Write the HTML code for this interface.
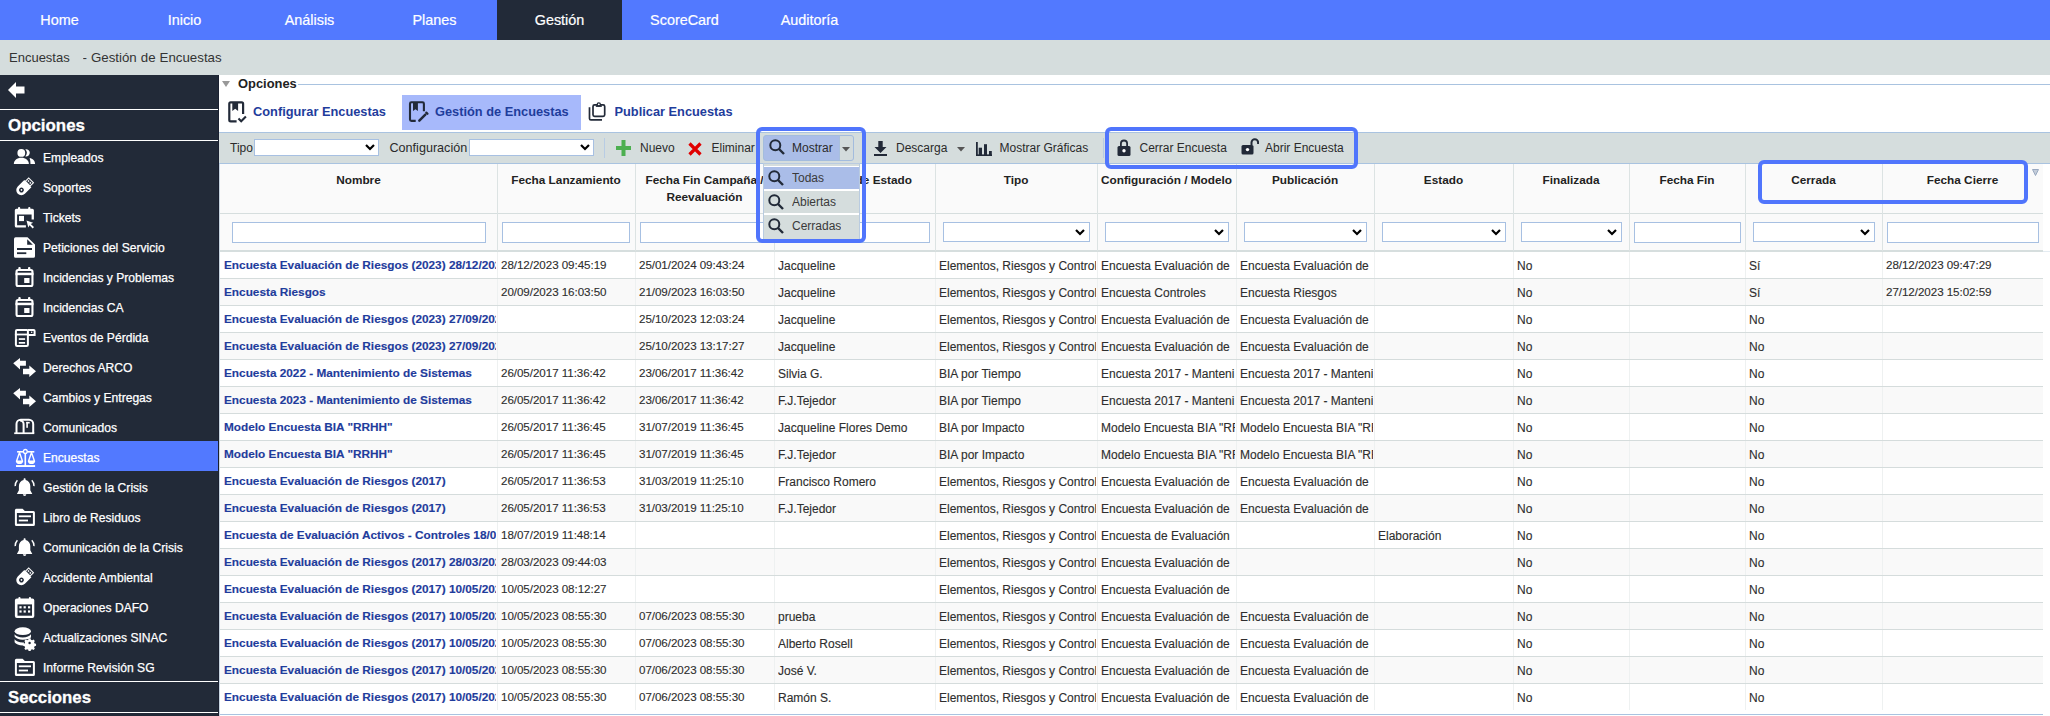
<!DOCTYPE html><html><head><meta charset="utf-8"><style>
*{margin:0;padding:0;box-sizing:border-box}
html,body{width:2050px;height:716px;overflow:hidden;background:#fff;font-family:"Liberation Sans",sans-serif}
.a{position:absolute}
.t{position:absolute;white-space:nowrap;overflow:hidden}
.nav{left:0;top:0;width:2050px;height:40px;background:#5279FF}
.navi{position:absolute;top:0;height:40px;line-height:40px;color:#fff;font-size:14.4px;text-align:center;width:125px;-webkit-text-stroke:0.2px #fff}
.crumb{left:0;top:40px;width:2050px;height:35px;background:#D5DDDD}
.side{left:0;top:75px;width:219px;height:641px;background:#222A38}
.sitem{position:absolute;left:0;width:218px;height:30px}
.sitem .lbl{position:absolute;left:43px;top:2px;line-height:30px;color:#fff;font-size:12.1px;white-space:nowrap;-webkit-text-stroke:0.25px #fff}
.sitem svg{position:absolute}
.hline{position:absolute;left:0;width:218px;height:2px;background:#fff}
.tb{left:219px;top:132px;width:1831px;height:32px;background:#D5DDDD;border-top:1px solid #A9C3E0;border-bottom:1px solid #A9C3E0}
.tbt{position:absolute;top:133px;height:32px;line-height:31px;font-size:12px;color:#2a2a2a;white-space:nowrap}
.sel{position:absolute;background:#fff;border:1px solid #A7C0E2}
.chev{position:absolute}
.hbox{position:absolute;border:4px solid #5075FC;border-radius:6px}
.hd{position:absolute;top:164px;height:49px;background:#FAFAFA}
.hdt{position:absolute;top:172px;line-height:17px;font-size:11.8px;font-weight:bold;color:#222;text-align:center;white-space:nowrap}
.cell{position:absolute;height:26px;line-height:26px;white-space:nowrap;overflow:hidden;font-size:12px;color:#2E2E2E;-webkit-text-stroke:0.12px #2E2E2E}
.nm{font-weight:bold;color:#1F3C9C;font-size:11.8px;-webkit-text-stroke:0.15px #1F3C9C}
.dt{font-size:11.6px;letter-spacing:-0.05px}
</style></head><body>
<div class="a nav"></div>
<div class="a" style="left:497px;top:0;width:125px;height:40px;background:#222A38"></div>
<div class="navi" style="left:-3.0px">Home</div>
<div class="navi" style="left:122.0px">Inicio</div>
<div class="navi" style="left:247.0px">Análisis</div>
<div class="navi" style="left:372.0px">Planes</div>
<div class="navi" style="left:497.0px">Gestión</div>
<div class="navi" style="left:622.0px">ScoreCard</div>
<div class="navi" style="left:747.0px">Auditoría</div>
<div class="a crumb"></div>
<div class="t" style="left:9px;top:40px;height:35px;line-height:35px;font-size:13px;color:#333">Encuestas</div>
<div class="t" style="left:82.5px;top:40px;height:35px;line-height:35px;font-size:13.3px;color:#333;word-spacing:0.3px">- Gestión de Encuestas</div>
<div class="a side"></div>
<svg class="a" style="left:8px;top:82px" width="17" height="16" viewBox="0 0 17 16"><path d="M0 8 L8 0 L8 4.5 L16.5 4.5 L16.5 11.5 L8 11.5 L8 16 Z" fill="#fff"/></svg>
<div class="hline" style="top:109px;height:1px"></div>
<div class="t" style="left:8px;top:112px;line-height:27px;font-size:16.9px;font-weight:bold;color:#fff;-webkit-text-stroke:0.3px #fff">Opciones</div>
<div class="hline" style="top:140px;height:1px"></div>
<div class="sitem" style="top:141px;"><svg width="30" height="30" viewBox="10 0 30 30" fill="#fff" style="left:10px;top:0"><circle cx="21.3" cy="11.9" r="3.9"/><path d="M25.3 8.3a3.65 3.65 0 1 1 0 7.1a5.3 5.3 0 0 0 0-7.1z"/><path d="M13.8 23.1c0-3.7 3.3-6.3 7.55-6.3s7.55 2.6 7.55 6.3z"/><path d="M29.6 17c3.2 0.5 5.5 2.7 5.5 6.1h-4.6c0-2.3-0.3-4.4-0.9-6.1z"/></svg><div class="lbl">Empleados</div></div>
<div class="sitem" style="top:171px;"><svg width="30" height="30" viewBox="10 0 30 30" fill="#fff" style="left:10px;top:0"><g transform="translate(24.6 15.8) rotate(-45) scale(0.97)"><path d="M-10 0a5.2 5.2 0 0 1 5.2-5.2h9.5v10.4h-9.5a5.2 5.2 0 0 1-5.2-5.2z"/><rect x="4" y="-4" width="6" height="8"/><rect x="5.1" y="-2.9" width="3.8" height="5.8" fill="#222A38"/><rect x="6.2" y="-2.1" width="1.6" height="1.6"/><rect x="6.2" y="0.5" width="1.6" height="1.6"/><circle cx="-4.6" cy="0" r="2.5" fill="#222A38"/><circle cx="-4.6" cy="0" r="0.9"/></g></svg><div class="lbl">Soportes</div></div>
<div class="sitem" style="top:201px;"><svg width="30" height="30" viewBox="10 0 30 30" fill="#fff" style="left:10px;top:0"><rect x="18" y="5.9" width="2.2" height="3.5" rx="1"/><rect x="28.2" y="5.9" width="2.2" height="3.5" rx="1"/><path d="M16.3 7.7h16a1.6 1.6 0 0 1 1.6 1.6v9.3h-2.3v-5.2h-14.5v10.9h8.8v2.3h-9.5a1.6 1.6 0 0 1-1.6-1.6v-15.7a1.6 1.6 0 0 1 1.6-1.6z"/><rect x="19" y="14.9" width="5" height="5.2"/><path d="M26.5 19.5l6.6 2.2-2.3 1.2 3.2 3.2-1.3 1.3-3.2-3.2-1.2 2.3z"/></svg><div class="lbl">Tickets</div></div>
<div class="sitem" style="top:231px;"><svg width="30" height="30" viewBox="10 0 30 30" fill="#fff" style="left:10px;top:0"><path d="M15.6 6.3h11.9l7.5 7.3v11.6a1.6 1.6 0 0 1-1.6 1.6h-17.8a1.6 1.6 0 0 1-1.6-1.6v-17.3a1.6 1.6 0 0 1 1.6-1.6z"/><path d="M27.2 8.3v5.5h5.6z" fill="#222A38"/><rect x="17" y="17" width="15" height="2" fill="#222A38"/><rect x="17" y="21.3" width="9.3" height="1.8" fill="#222A38"/></svg><div class="lbl">Peticiones del Servicio</div></div>
<div class="sitem" style="top:261px;"><svg width="30" height="30" viewBox="10 0 30 30" fill="#fff" style="left:10px;top:0"><rect x="16.55" y="9" width="15.9" height="15.95" rx="1.5" stroke="#fff" stroke-width="2.1" fill="none"/><rect x="15.5" y="11.7" width="18" height="2.5"/><rect x="18.3" y="6" width="2.4" height="3" rx="1"/><rect x="28" y="6" width="2.4" height="3" rx="1"/><rect x="24.2" y="17" width="5.3" height="5"/></svg><div class="lbl">Incidencias y Problemas</div></div>
<div class="sitem" style="top:291px;"><svg width="30" height="30" viewBox="10 0 30 30" fill="#fff" style="left:10px;top:0"><rect x="16.55" y="9" width="15.9" height="15.95" rx="1.5" stroke="#fff" stroke-width="2.1" fill="none"/><rect x="15.5" y="11.7" width="18" height="2.5"/><rect x="18.3" y="6" width="2.4" height="3" rx="1"/><rect x="28" y="6" width="2.4" height="3" rx="1"/><rect x="24.2" y="17" width="5.3" height="5"/></svg><div class="lbl">Incidencias CA</div></div>
<div class="sitem" style="top:321px;"><svg width="30" height="30" viewBox="10 0 30 30" fill="#fff" style="left:10px;top:0"><rect x="15.9" y="9" width="12" height="16" rx="1.2" stroke="#fff" stroke-width="2" fill="none"/><rect x="14.9" y="12.6" width="14" height="1.8"/><rect x="18.8" y="17.2" width="6.3" height="1.7"/><rect x="18.8" y="21" width="6.3" height="1.7"/><path d="M27.9 9h5.7a1 1 0 0 1 1 1v4h-6.7" stroke="#fff" stroke-width="2" fill="none"/><rect x="31" y="10.6" width="1.3" height="1.3"/></svg><div class="lbl">Eventos de Pérdida</div></div>
<div class="sitem" style="top:351px;"><svg width="30" height="30" viewBox="10 0 30 30" fill="#fff" style="left:10px;top:0"><path d="M13.2 12.3L20 6.9V9.8H25.9V14.8H20V18.6Z"/><path d="M36 20.3L29.3 26V23.2H23V17.8H29.3V14.4Z"/></svg><div class="lbl">Derechos ARCO</div></div>
<div class="sitem" style="top:381px;"><svg width="30" height="30" viewBox="10 0 30 30" fill="#fff" style="left:10px;top:0"><path d="M13.2 12.3L20 6.9V9.8H25.9V14.8H20V18.6Z"/><path d="M36 20.3L29.3 26V23.2H23V17.8H29.3V14.4Z"/></svg><div class="lbl">Cambios y Entregas</div></div>
<div class="sitem" style="top:411px;"><svg width="30" height="30" viewBox="10 0 30 30" fill="#fff" style="left:10px;top:0"><path d="M16.5 22V13a4.2 4.2 0 0 1 4.2-4.2H29a4.2 4.2 0 0 1 4.2 4.2V22" stroke="#fff" stroke-width="2" fill="none"/><path d="M23.6 22V13a3.6 3.6 0 0 0-3.6-3.6" stroke="#fff" stroke-width="2" fill="none"/><rect x="26.3" y="10.9" width="1.6" height="5.9"/><rect x="26.3" y="10.9" width="3.4" height="1.6"/><rect x="14.2" y="21.4" width="20.1" height="1.7"/></svg><div class="lbl">Comunicados</div></div>
<div class="sitem" style="top:441px;background:#5279FF;"><svg width="30" height="30" viewBox="10 0 30 30" fill="#fff" style="left:10px;top:0"><rect x="24.5" y="10" width="1.6" height="15"/><circle cx="25.3" cy="10.4" r="1.9" stroke="#fff" stroke-width="1.3" fill="#5279FF"/><rect x="17.1" y="10" width="6.3" height="1.6"/><rect x="27.2" y="10" width="7.1" height="1.6"/><path d="M19.5 11.5l-3 8.8h6z M31.5 11.5l-3 8.8h6z" stroke="#fff" stroke-width="1.4" fill="none" stroke-linejoin="round"/><path d="M15.9 20a3.6 3.1 0 0 0 7.2 0z M27.9 20a3.6 3.1 0 0 0 7.2 0z"/><rect x="16" y="24.1" width="19.1" height="1.9"/></svg><div class="lbl">Encuestas</div></div>
<div class="sitem" style="top:471px;"><svg width="30" height="30" viewBox="10 0 30 30" fill="#fff" style="left:10px;top:0"><path d="M24.6 7.2c0.6 0 1 0.4 1 1v0.7c2.9 0.6 4.7 3.1 4.7 6.1v4.3l2 3.6H16.9l2-3.6v-4.3c0-3 1.8-5.5 4.7-6.1v-0.7c0-0.6 0.4-1 1-1z"/><path d="M22.9 23.2h3.4a1.7 1.7 0 0 1-3.4 0z"/><path d="M17.4 9.3a8 8 0 0 0-2.2 5.8 M31.8 9.3a8 8 0 0 1 2.2 5.8" stroke="#fff" stroke-width="1.5" fill="none"/></svg><div class="lbl">Gestión de la Crisis</div></div>
<div class="sitem" style="top:501px;"><svg width="30" height="30" viewBox="10 0 30 30" fill="#fff" style="left:10px;top:0"><path d="M16.4 7.7h6.2l2.2 2.2h8.6a1.5 1.5 0 0 1 1.5 1.5v12a1.5 1.5 0 0 1-1.5 1.5h-17a1.5 1.5 0 0 1-1.5-1.5v-14.2a1.5 1.5 0 0 1 1.5-1.5z" stroke="none"/><path d="M16.9 11.9h16v10.9h-16z" fill="#222A38"/><rect x="18.8" y="14.4" width="12.2" height="1.8"/><rect x="18.8" y="18.6" width="9.2" height="1.8"/></svg><div class="lbl">Libro de Residuos</div></div>
<div class="sitem" style="top:531px;"><svg width="30" height="30" viewBox="10 0 30 30" fill="#fff" style="left:10px;top:0"><path d="M24.6 7.2c0.6 0 1 0.4 1 1v0.7c2.9 0.6 4.7 3.1 4.7 6.1v4.3l2 3.6H16.9l2-3.6v-4.3c0-3 1.8-5.5 4.7-6.1v-0.7c0-0.6 0.4-1 1-1z"/><path d="M22.9 23.2h3.4a1.7 1.7 0 0 1-3.4 0z"/><path d="M17.4 9.3a8 8 0 0 0-2.2 5.8 M31.8 9.3a8 8 0 0 1 2.2 5.8" stroke="#fff" stroke-width="1.5" fill="none"/></svg><div class="lbl">Comunicación de la Crisis</div></div>
<div class="sitem" style="top:561px;"><svg width="30" height="30" viewBox="10 0 30 30" fill="#fff" style="left:10px;top:0"><g transform="translate(24.6 15.8) rotate(-45) scale(0.97)"><path d="M-10 0a5.2 5.2 0 0 1 5.2-5.2h9.5v10.4h-9.5a5.2 5.2 0 0 1-5.2-5.2z"/><rect x="4" y="-4" width="6" height="8"/><rect x="5.1" y="-2.9" width="3.8" height="5.8" fill="#222A38"/><rect x="6.2" y="-2.1" width="1.6" height="1.6"/><rect x="6.2" y="0.5" width="1.6" height="1.6"/><circle cx="-4.6" cy="0" r="2.5" fill="#222A38"/><circle cx="-4.6" cy="0" r="0.9"/></g></svg><div class="lbl">Accidente Ambiental</div></div>
<div class="sitem" style="top:591px;"><svg width="30" height="30" viewBox="10 0 30 30" fill="#fff" style="left:10px;top:0"><rect x="18.4" y="5.9" width="2.1" height="3.5" rx="1"/><rect x="28.9" y="5.9" width="2.1" height="3.5" rx="1"/><rect x="14.9" y="7.6" width="19.4" height="19.4" rx="2"/><rect x="17.5" y="13.4" width="14.5" height="11.3" fill="#222A38"/><g><rect x="19.4" y="15.2" width="2.2" height="2.2"/><rect x="23.6" y="15.2" width="2.2" height="2.2"/><rect x="28" y="15.2" width="2.2" height="2.2"/><rect x="19.4" y="19.4" width="2.2" height="2.2"/><rect x="23.6" y="19.4" width="2.2" height="2.2"/><rect x="28" y="19.4" width="2.2" height="2.2"/></g></svg><div class="lbl">Operaciones DAFO</div></div>
<div class="sitem" style="top:621px;"><svg width="30" height="30" viewBox="10 0 30 30" fill="#fff" style="left:10px;top:0"><ellipse cx="22.8" cy="10.2" rx="8.2" ry="3.9"/><path d="M14.6 13.2c1.2 2 4.3 3.2 8.2 3.2s7-1.2 8.2-3.2v3.4c-0.8 0.3-1.5 0.6-2 1.1l-0.6 0.3c-1.6 0.5-3.5 0.7-5.6 0.7-3.9 0-7-1.2-8.2-3.2z"/><path d="M14.6 18.3c1.2 2 4.3 3.2 8.2 3.2l1.1 0v2.9l-1.1 0c-3.9 0-7-1.2-8.2-3.2z"/><g transform="translate(29.6 22) scale(0.95)"><path d="M-1 -4.9h2l0.4 1.5 1.3 0.6 1.4-0.8 1.4 1.4-0.8 1.4 0.6 1.3 1.5 0.4v2l-1.5 0.4-0.6 1.3 0.8 1.4-1.4 1.4-1.4-0.8-1.3 0.6-0.4 1.5h-2l-0.4-1.5-1.3-0.6-1.4 0.8-1.4-1.4 0.8-1.4-0.6-1.3-1.5-0.4v-2l1.5-0.4 0.6-1.3-0.8-1.4 1.4-1.4 1.4 0.8 1.3-0.6z"/><circle r="1.3" fill="#222A38"/></g></svg><div class="lbl">Actualizaciones SINAC</div></div>
<div class="sitem" style="top:651px;"><svg width="30" height="30" viewBox="10 0 30 30" fill="#fff" style="left:10px;top:0"><path d="M16.4 7.7h6.2l2.2 2.2h8.6a1.5 1.5 0 0 1 1.5 1.5v12a1.5 1.5 0 0 1-1.5 1.5h-17a1.5 1.5 0 0 1-1.5-1.5v-14.2a1.5 1.5 0 0 1 1.5-1.5z" stroke="none"/><path d="M16.9 11.9h16v10.9h-16z" fill="#222A38"/><rect x="18.8" y="14.4" width="12.2" height="1.8"/><rect x="18.8" y="18.6" width="9.2" height="1.8"/></svg><div class="lbl">Informe Revisión SG</div></div>
<div class="hline" style="top:681px;height:1px"></div>
<div class="t" style="left:8px;top:684px;line-height:28px;font-size:16.8px;font-weight:bold;color:#fff;-webkit-text-stroke:0.3px #fff">Secciones</div>
<div class="hline" style="top:712px;height:1px"></div>
<div class="a" style="left:218px;top:75px;width:1px;height:641px;background:#1a2030"></div>
<svg class="a" style="left:222px;top:81px" width="8" height="6" viewBox="0 0 8 6"><path d="M0 0h8l-4 6z" fill="#999"/></svg>
<div class="t" style="left:238px;top:75px;line-height:17px;font-size:12.9px;font-weight:bold;color:#222">Opciones</div>
<div class="a" style="left:298px;top:84px;width:1752px;height:1px;background:#A9C3E0"></div>
<div class="a" style="left:402px;top:95px;width:179px;height:35px;background:#A7B9FB"></div>
<svg class="a" style="left:224px;top:98px" width="26" height="28" viewBox="224 98 26 28"><path d="M236.6 121.3H230.7a1.4 1.4 0 0 1-1.4-1.4V103.8a1.4 1.4 0 0 1 1.4-1.4H241.7a1.4 1.4 0 0 1 1.4 1.4V114" stroke="#222A38" stroke-width="2.2" fill="none"/><path d="M232.3 102.5H238.1V111L235.2 108.7L232.3 111Z" fill="#222A38"/><path d="M238.5 118.6L241.2 121.3L245.9 116.6" stroke="#222A38" stroke-width="2.1" fill="none"/></svg>
<svg class="a" style="left:404px;top:98px" width="30" height="28" viewBox="404 98 30 28"><path d="M415.7 120.9H411.4a1.4 1.4 0 0 1-1.4-1.4V103.7a1.4 1.4 0 0 1 1.4-1.4H422.5a1.4 1.4 0 0 1 1.4 1.4V111.3" stroke="#222A38" stroke-width="2.1" fill="none"/><path d="M413 102.5H417.9V111.1L415.45 109.2L413 111.1Z" fill="#222A38"/><path d="M419.3 120.6L425.3 114.6" stroke="#222A38" stroke-width="2.5" stroke-linecap="round"/><path d="M426.3 112.6L427.5 113.8" stroke="#222A38" stroke-width="2.2" stroke-linecap="round"/></svg>
<svg class="a" style="left:584px;top:98px" width="28" height="28" viewBox="584 98 28 28"><path d="M589.5 107.2V118.5a1.4 1.4 0 0 0 1.4 1.4H602" stroke="#222A38" stroke-width="1.7" fill="none"/><rect x="593" y="104.9" width="11.7" height="11.5" rx="1.6" stroke="#222A38" stroke-width="1.7" fill="none"/><circle cx="598.8" cy="104.4" r="1.6" stroke="#222A38" stroke-width="1.3" fill="#fff"/><rect x="595.8" y="105.3" width="6" height="1.6" fill="#222A38"/></svg>
<div class="t" style="left:253px;top:94px;line-height:35px;font-size:12.8px;font-weight:bold;color:#1F3D9C">Configurar Encuestas</div>
<div class="t" style="left:435px;top:94px;line-height:35px;font-size:12.8px;font-weight:bold;color:#1F3D9C">Gestión de Encuestas</div>
<div class="t" style="left:614.5px;top:94px;line-height:35px;font-size:12.8px;font-weight:bold;color:#1F3D9C">Publicar Encuestas</div>
<div class="a tb"></div>
<div class="tbt" style="left:230px">Tipo</div>
<div class="sel" style="left:254px;top:139px;width:125px;height:17px"></div>
<svg class="chev" style="left:365px;top:144px" width="10" height="7" viewBox="0 0 10 7"><path d="M1 1l4 4 4-4" stroke="#000" stroke-width="2.2" fill="none"/></svg>
<div class="tbt" style="left:389.5px;font-size:12.6px">Configuración</div>
<div class="sel" style="left:469px;top:139px;width:125px;height:17px"></div>
<svg class="chev" style="left:580px;top:144px" width="10" height="7" viewBox="0 0 10 7"><path d="M1 1l4 4 4-4" stroke="#000" stroke-width="2.2" fill="none"/></svg>
<div class="a" style="left:604px;top:138px;width:1px;height:20px;background:#B8CCE4"></div>
<svg class="a" style="left:616px;top:140px" width="15" height="16" viewBox="0 0 15 16"><rect x="5.5" y="0" width="4" height="16" fill="#4CAF50"/><rect x="0" y="6" width="15" height="4" fill="#4CAF50"/></svg>
<div class="tbt" style="left:640px">Nuevo</div>
<svg class="a" style="left:688px;top:142px" width="14" height="14" viewBox="0 0 14 14"><path d="M1.5 1.5l11 11 M12.5 1.5l-11 11" stroke="#E00000" stroke-width="3.2"/></svg>
<div class="tbt" style="left:711.5px">Eliminar</div>
<div class="a" style="left:763px;top:135px;width:91px;height:26px;background:#AABDE8;border:1px solid #A3BCDD;border-radius:3px"></div>
<div class="a" style="left:839px;top:136px;width:14px;height:24px;background:#D3DBDC;border-left:1px solid #A9C0DE;border-radius:0 2px 2px 0"></div>
<svg class="a" style="left:769px;top:139px" width="16" height="16" viewBox="0 0 16 16"><circle cx="6.3" cy="6.3" r="5" stroke="#222A38" stroke-width="2" fill="none"/><path d="M10 10l5 5" stroke="#222A38" stroke-width="2.4"/></svg>
<div class="tbt" style="left:792px">Mostrar</div>
<svg class="a" style="left:842px;top:147px" width="8" height="5" viewBox="0 0 8 5"><path d="M0 0h8l-4 4.5z" fill="#555"/></svg>
<svg class="a" style="left:874px;top:141px" width="13" height="15" viewBox="0 0 13 15"><path d="M4.3 0h4.4v6h3.8l-6 6-6-6h3.8z" fill="#222A38"/><rect x="0" y="13" width="13" height="2" fill="#222A38"/></svg>
<div class="tbt" style="left:896px">Descarga</div>
<svg class="a" style="left:957px;top:147px" width="8" height="5" viewBox="0 0 8 5"><path d="M0 0h8l-4 4.5z" fill="#555"/></svg>
<svg class="a" style="left:976px;top:142px" width="16" height="14" viewBox="0 0 16 14"><rect x="0" y="0" width="1.8" height="14" fill="#222A38"/><rect x="0" y="12.4" width="16" height="1.6" fill="#222A38"/><rect x="2.7" y="5.7" width="3.3" height="8" fill="#222A38"/><rect x="8" y="2.2" width="3" height="11" fill="#222A38"/><rect x="13" y="9" width="2.8" height="5" fill="#222A38"/></svg>
<div class="tbt" style="left:999.5px">Mostrar Gráficas</div>
<svg class="a" style="left:1117px;top:139px" width="14" height="17" viewBox="0 0 14 17"><path d="M3.9 7.5V4.6a3.1 3.1 0 0 1 6.2 0V7.5" stroke="#222A38" stroke-width="1.8" fill="none"/><rect x="0.5" y="7" width="13" height="10" rx="1.5" fill="#222A38"/><circle cx="7" cy="11.8" r="1.7" fill="#fff"/></svg>
<div class="a" style="left:1103px;top:138px;width:1px;height:20px;background:#B8CCE4"></div>
<div class="tbt" style="left:1139.5px">Cerrar Encuesta</div>
<svg class="a" style="left:1241px;top:138px" width="18" height="17" viewBox="0 0 18 17"><path d="M10.5 7V4.5a3.3 3.3 0 0 1 6.6 0V6" stroke="#222A38" stroke-width="2" fill="none"/><rect x="0.5" y="7" width="12" height="9.5" rx="1.5" fill="#222A38"/><circle cx="6.5" cy="11.6" r="1.7" fill="#fff"/></svg>
<div class="tbt" style="left:1265px">Abrir Encuesta</div>
<div class="a" style="left:220px;top:164px;width:1823px;height:87px;background:#FAFAFA"></div>
<div class="a" style="left:220px;top:213px;width:1823px;height:1px;background:#D6DEDE"></div>
<div class="a" style="left:220px;top:250px;width:1823px;height:2px;background:#D6DEDE"></div>
<div class="a" style="left:2043px;top:251px;width:7px;height:1px;background:#E4ECF2"></div>
<div class="hdt" style="left:220px;width:277px">Nombre</div>
<div class="hdt" style="left:497px;width:138px">Fecha Lanzamiento</div>
<div class="a" style="left:497px;top:164px;width:1px;height:87px;background:#DCE3E3"></div>
<div class="hdt" style="left:635px;width:139px">Fecha Fin Campaña /<br>Reevaluación</div>
<div class="a" style="left:635px;top:164px;width:1px;height:87px;background:#DCE3E3"></div>
<div class="hdt" style="left:700px;width:212px;text-align:right">Responsable de Estado</div>
<div class="a" style="left:774px;top:164px;width:1px;height:87px;background:#DCE3E3"></div>
<div class="hdt" style="left:935px;width:162px">Tipo</div>
<div class="a" style="left:935px;top:164px;width:1px;height:87px;background:#DCE3E3"></div>
<div class="hdt" style="left:1097px;width:139px">Configuración / Modelo</div>
<div class="a" style="left:1097px;top:164px;width:1px;height:87px;background:#DCE3E3"></div>
<div class="hdt" style="left:1236px;width:138px">Publicación</div>
<div class="a" style="left:1236px;top:164px;width:1px;height:87px;background:#DCE3E3"></div>
<div class="hdt" style="left:1374px;width:139px">Estado</div>
<div class="a" style="left:1374px;top:164px;width:1px;height:87px;background:#DCE3E3"></div>
<div class="hdt" style="left:1513px;width:116px">Finalizada</div>
<div class="a" style="left:1513px;top:164px;width:1px;height:87px;background:#DCE3E3"></div>
<div class="hdt" style="left:1629px;width:116px">Fecha Fin</div>
<div class="a" style="left:1629px;top:164px;width:1px;height:87px;background:#DCE3E3"></div>
<div class="hdt" style="left:1745px;width:137px">Cerrada</div>
<div class="a" style="left:1745px;top:164px;width:1px;height:87px;background:#DCE3E3"></div>
<div class="hdt" style="left:1882px;width:161px">Fecha Cierre</div>
<div class="a" style="left:1882px;top:164px;width:1px;height:87px;background:#DCE3E3"></div>
<div class="sel" style="left:232px;top:222px;width:254px;height:21px"></div>
<div class="sel" style="left:502px;top:222px;width:128px;height:21px"></div>
<div class="sel" style="left:640px;top:222px;width:129px;height:21px"></div>
<div class="sel" style="left:779px;top:222px;width:151px;height:21px"></div>
<div class="sel" style="left:943px;top:222px;width:147px;height:20px"></div>
<svg class="chev" style="left:1075px;top:229px" width="10" height="7" viewBox="0 0 10 7"><path d="M1 1l4 4 4-4" stroke="#000" stroke-width="2.2" fill="none"/></svg>
<div class="sel" style="left:1105px;top:222px;width:124px;height:20px"></div>
<svg class="chev" style="left:1214px;top:229px" width="10" height="7" viewBox="0 0 10 7"><path d="M1 1l4 4 4-4" stroke="#000" stroke-width="2.2" fill="none"/></svg>
<div class="sel" style="left:1244px;top:222px;width:123px;height:20px"></div>
<svg class="chev" style="left:1352px;top:229px" width="10" height="7" viewBox="0 0 10 7"><path d="M1 1l4 4 4-4" stroke="#000" stroke-width="2.2" fill="none"/></svg>
<div class="sel" style="left:1382px;top:222px;width:124px;height:20px"></div>
<svg class="chev" style="left:1491px;top:229px" width="10" height="7" viewBox="0 0 10 7"><path d="M1 1l4 4 4-4" stroke="#000" stroke-width="2.2" fill="none"/></svg>
<div class="sel" style="left:1521px;top:222px;width:101px;height:20px"></div>
<svg class="chev" style="left:1607px;top:229px" width="10" height="7" viewBox="0 0 10 7"><path d="M1 1l4 4 4-4" stroke="#000" stroke-width="2.2" fill="none"/></svg>
<div class="sel" style="left:1634px;top:222px;width:107px;height:21px"></div>
<div class="sel" style="left:1753px;top:222px;width:122px;height:20px"></div>
<svg class="chev" style="left:1860px;top:229px" width="10" height="7" viewBox="0 0 10 7"><path d="M1 1l4 4 4-4" stroke="#000" stroke-width="2.2" fill="none"/></svg>
<div class="sel" style="left:1887px;top:222px;width:152px;height:21px"></div>
<svg class="a" style="left:2032px;top:169px" width="7" height="7" viewBox="0 0 7 7"><path d="M0.5 0.5h6l-3 6z" fill="#C3CCD8" stroke="#98A8C0" stroke-width="1"/></svg>
<div class="a" style="left:220px;top:252px;width:1823px;height:26px;background:#FFFFFF"></div>
<div class="a" style="left:220px;top:278px;width:1823px;height:1px;background:#D5DCDC"></div>
<div class="cell nm" style="left:224px;top:252px;width:272px">Encuesta Evaluación de Riesgos (2023) 28/12/2023</div>
<div class="a" style="left:497px;top:252px;width:1px;height:26px;background:#EEF1F1"></div>
<div class="cell dt" style="left:501px;top:252px;width:133px">28/12/2023 09:45:19</div>
<div class="a" style="left:635px;top:252px;width:1px;height:26px;background:#EEF1F1"></div>
<div class="cell dt" style="left:639px;top:252px;width:134px">25/01/2024 09:43:24</div>
<div class="a" style="left:774px;top:252px;width:1px;height:26px;background:#EEF1F1"></div>
<div class="cell" style="left:778px;top:253px;width:156px">Jacqueline</div>
<div class="a" style="left:935px;top:252px;width:1px;height:26px;background:#EEF1F1"></div>
<div class="cell" style="left:939px;top:253px;width:157px">Elementos, Riesgos y Controles</div>
<div class="a" style="left:1097px;top:252px;width:1px;height:26px;background:#EEF1F1"></div>
<div class="cell" style="left:1101px;top:253px;width:134px">Encuesta Evaluación de</div>
<div class="a" style="left:1236px;top:252px;width:1px;height:26px;background:#EEF1F1"></div>
<div class="cell" style="left:1240px;top:253px;width:133px">Encuesta Evaluación de</div>
<div class="a" style="left:1374px;top:252px;width:1px;height:26px;background:#EEF1F1"></div>
<div class="a" style="left:1513px;top:252px;width:1px;height:26px;background:#EEF1F1"></div>
<div class="cell" style="left:1517px;top:253px;width:111px">No</div>
<div class="a" style="left:1629px;top:252px;width:1px;height:26px;background:#EEF1F1"></div>
<div class="a" style="left:1745px;top:252px;width:1px;height:26px;background:#EEF1F1"></div>
<div class="cell" style="left:1749px;top:253px;width:132px">Sí</div>
<div class="a" style="left:1882px;top:252px;width:1px;height:26px;background:#EEF1F1"></div>
<div class="cell dt" style="left:1886px;top:252px;width:156px">28/12/2023 09:47:29</div>
<div class="a" style="left:220px;top:279px;width:1823px;height:26px;background:#F9F9F9"></div>
<div class="a" style="left:220px;top:305px;width:1823px;height:1px;background:#D5DCDC"></div>
<div class="cell nm" style="left:224px;top:279px;width:272px">Encuesta Riesgos</div>
<div class="a" style="left:497px;top:279px;width:1px;height:26px;background:#EEF1F1"></div>
<div class="cell dt" style="left:501px;top:279px;width:133px">20/09/2023 16:03:50</div>
<div class="a" style="left:635px;top:279px;width:1px;height:26px;background:#EEF1F1"></div>
<div class="cell dt" style="left:639px;top:279px;width:134px">21/09/2023 16:03:50</div>
<div class="a" style="left:774px;top:279px;width:1px;height:26px;background:#EEF1F1"></div>
<div class="cell" style="left:778px;top:280px;width:156px">Jacqueline</div>
<div class="a" style="left:935px;top:279px;width:1px;height:26px;background:#EEF1F1"></div>
<div class="cell" style="left:939px;top:280px;width:157px">Elementos, Riesgos y Controles</div>
<div class="a" style="left:1097px;top:279px;width:1px;height:26px;background:#EEF1F1"></div>
<div class="cell" style="left:1101px;top:280px;width:134px">Encuesta Controles</div>
<div class="a" style="left:1236px;top:279px;width:1px;height:26px;background:#EEF1F1"></div>
<div class="cell" style="left:1240px;top:280px;width:133px">Encuesta Riesgos</div>
<div class="a" style="left:1374px;top:279px;width:1px;height:26px;background:#EEF1F1"></div>
<div class="a" style="left:1513px;top:279px;width:1px;height:26px;background:#EEF1F1"></div>
<div class="cell" style="left:1517px;top:280px;width:111px">No</div>
<div class="a" style="left:1629px;top:279px;width:1px;height:26px;background:#EEF1F1"></div>
<div class="a" style="left:1745px;top:279px;width:1px;height:26px;background:#EEF1F1"></div>
<div class="cell" style="left:1749px;top:280px;width:132px">Sí</div>
<div class="a" style="left:1882px;top:279px;width:1px;height:26px;background:#EEF1F1"></div>
<div class="cell dt" style="left:1886px;top:279px;width:156px">27/12/2023 15:02:59</div>
<div class="a" style="left:220px;top:306px;width:1823px;height:26px;background:#FFFFFF"></div>
<div class="a" style="left:220px;top:332px;width:1823px;height:1px;background:#D5DCDC"></div>
<div class="cell nm" style="left:224px;top:306px;width:272px">Encuesta Evaluación de Riesgos (2023) 27/09/2023</div>
<div class="a" style="left:497px;top:306px;width:1px;height:26px;background:#EEF1F1"></div>
<div class="a" style="left:635px;top:306px;width:1px;height:26px;background:#EEF1F1"></div>
<div class="cell dt" style="left:639px;top:306px;width:134px">25/10/2023 12:03:24</div>
<div class="a" style="left:774px;top:306px;width:1px;height:26px;background:#EEF1F1"></div>
<div class="cell" style="left:778px;top:307px;width:156px">Jacqueline</div>
<div class="a" style="left:935px;top:306px;width:1px;height:26px;background:#EEF1F1"></div>
<div class="cell" style="left:939px;top:307px;width:157px">Elementos, Riesgos y Controles</div>
<div class="a" style="left:1097px;top:306px;width:1px;height:26px;background:#EEF1F1"></div>
<div class="cell" style="left:1101px;top:307px;width:134px">Encuesta Evaluación de</div>
<div class="a" style="left:1236px;top:306px;width:1px;height:26px;background:#EEF1F1"></div>
<div class="cell" style="left:1240px;top:307px;width:133px">Encuesta Evaluación de</div>
<div class="a" style="left:1374px;top:306px;width:1px;height:26px;background:#EEF1F1"></div>
<div class="a" style="left:1513px;top:306px;width:1px;height:26px;background:#EEF1F1"></div>
<div class="cell" style="left:1517px;top:307px;width:111px">No</div>
<div class="a" style="left:1629px;top:306px;width:1px;height:26px;background:#EEF1F1"></div>
<div class="a" style="left:1745px;top:306px;width:1px;height:26px;background:#EEF1F1"></div>
<div class="cell" style="left:1749px;top:307px;width:132px">No</div>
<div class="a" style="left:1882px;top:306px;width:1px;height:26px;background:#EEF1F1"></div>
<div class="a" style="left:220px;top:333px;width:1823px;height:26px;background:#F9F9F9"></div>
<div class="a" style="left:220px;top:359px;width:1823px;height:1px;background:#D5DCDC"></div>
<div class="cell nm" style="left:224px;top:333px;width:272px">Encuesta Evaluación de Riesgos (2023) 27/09/2023</div>
<div class="a" style="left:497px;top:333px;width:1px;height:26px;background:#EEF1F1"></div>
<div class="a" style="left:635px;top:333px;width:1px;height:26px;background:#EEF1F1"></div>
<div class="cell dt" style="left:639px;top:333px;width:134px">25/10/2023 13:17:27</div>
<div class="a" style="left:774px;top:333px;width:1px;height:26px;background:#EEF1F1"></div>
<div class="cell" style="left:778px;top:334px;width:156px">Jacqueline</div>
<div class="a" style="left:935px;top:333px;width:1px;height:26px;background:#EEF1F1"></div>
<div class="cell" style="left:939px;top:334px;width:157px">Elementos, Riesgos y Controles</div>
<div class="a" style="left:1097px;top:333px;width:1px;height:26px;background:#EEF1F1"></div>
<div class="cell" style="left:1101px;top:334px;width:134px">Encuesta Evaluación de</div>
<div class="a" style="left:1236px;top:333px;width:1px;height:26px;background:#EEF1F1"></div>
<div class="cell" style="left:1240px;top:334px;width:133px">Encuesta Evaluación de</div>
<div class="a" style="left:1374px;top:333px;width:1px;height:26px;background:#EEF1F1"></div>
<div class="a" style="left:1513px;top:333px;width:1px;height:26px;background:#EEF1F1"></div>
<div class="cell" style="left:1517px;top:334px;width:111px">No</div>
<div class="a" style="left:1629px;top:333px;width:1px;height:26px;background:#EEF1F1"></div>
<div class="a" style="left:1745px;top:333px;width:1px;height:26px;background:#EEF1F1"></div>
<div class="cell" style="left:1749px;top:334px;width:132px">No</div>
<div class="a" style="left:1882px;top:333px;width:1px;height:26px;background:#EEF1F1"></div>
<div class="a" style="left:220px;top:360px;width:1823px;height:26px;background:#FFFFFF"></div>
<div class="a" style="left:220px;top:386px;width:1823px;height:1px;background:#D5DCDC"></div>
<div class="cell nm" style="left:224px;top:360px;width:272px">Encuesta 2022 - Mantenimiento de Sistemas</div>
<div class="a" style="left:497px;top:360px;width:1px;height:26px;background:#EEF1F1"></div>
<div class="cell dt" style="left:501px;top:360px;width:133px">26/05/2017 11:36:42</div>
<div class="a" style="left:635px;top:360px;width:1px;height:26px;background:#EEF1F1"></div>
<div class="cell dt" style="left:639px;top:360px;width:134px">23/06/2017 11:36:42</div>
<div class="a" style="left:774px;top:360px;width:1px;height:26px;background:#EEF1F1"></div>
<div class="cell" style="left:778px;top:361px;width:156px">Silvia G.</div>
<div class="a" style="left:935px;top:360px;width:1px;height:26px;background:#EEF1F1"></div>
<div class="cell" style="left:939px;top:361px;width:157px">BIA por Tiempo</div>
<div class="a" style="left:1097px;top:360px;width:1px;height:26px;background:#EEF1F1"></div>
<div class="cell" style="left:1101px;top:361px;width:134px">Encuesta 2017 - Manteni</div>
<div class="a" style="left:1236px;top:360px;width:1px;height:26px;background:#EEF1F1"></div>
<div class="cell" style="left:1240px;top:361px;width:133px">Encuesta 2017 - Manteni</div>
<div class="a" style="left:1374px;top:360px;width:1px;height:26px;background:#EEF1F1"></div>
<div class="a" style="left:1513px;top:360px;width:1px;height:26px;background:#EEF1F1"></div>
<div class="cell" style="left:1517px;top:361px;width:111px">No</div>
<div class="a" style="left:1629px;top:360px;width:1px;height:26px;background:#EEF1F1"></div>
<div class="a" style="left:1745px;top:360px;width:1px;height:26px;background:#EEF1F1"></div>
<div class="cell" style="left:1749px;top:361px;width:132px">No</div>
<div class="a" style="left:1882px;top:360px;width:1px;height:26px;background:#EEF1F1"></div>
<div class="a" style="left:220px;top:387px;width:1823px;height:26px;background:#F9F9F9"></div>
<div class="a" style="left:220px;top:413px;width:1823px;height:1px;background:#D5DCDC"></div>
<div class="cell nm" style="left:224px;top:387px;width:272px">Encuesta 2023 - Mantenimiento de Sistemas</div>
<div class="a" style="left:497px;top:387px;width:1px;height:26px;background:#EEF1F1"></div>
<div class="cell dt" style="left:501px;top:387px;width:133px">26/05/2017 11:36:42</div>
<div class="a" style="left:635px;top:387px;width:1px;height:26px;background:#EEF1F1"></div>
<div class="cell dt" style="left:639px;top:387px;width:134px">23/06/2017 11:36:42</div>
<div class="a" style="left:774px;top:387px;width:1px;height:26px;background:#EEF1F1"></div>
<div class="cell" style="left:778px;top:388px;width:156px">F.J.Tejedor</div>
<div class="a" style="left:935px;top:387px;width:1px;height:26px;background:#EEF1F1"></div>
<div class="cell" style="left:939px;top:388px;width:157px">BIA por Tiempo</div>
<div class="a" style="left:1097px;top:387px;width:1px;height:26px;background:#EEF1F1"></div>
<div class="cell" style="left:1101px;top:388px;width:134px">Encuesta 2017 - Manteni</div>
<div class="a" style="left:1236px;top:387px;width:1px;height:26px;background:#EEF1F1"></div>
<div class="cell" style="left:1240px;top:388px;width:133px">Encuesta 2017 - Manteni</div>
<div class="a" style="left:1374px;top:387px;width:1px;height:26px;background:#EEF1F1"></div>
<div class="a" style="left:1513px;top:387px;width:1px;height:26px;background:#EEF1F1"></div>
<div class="cell" style="left:1517px;top:388px;width:111px">No</div>
<div class="a" style="left:1629px;top:387px;width:1px;height:26px;background:#EEF1F1"></div>
<div class="a" style="left:1745px;top:387px;width:1px;height:26px;background:#EEF1F1"></div>
<div class="cell" style="left:1749px;top:388px;width:132px">No</div>
<div class="a" style="left:1882px;top:387px;width:1px;height:26px;background:#EEF1F1"></div>
<div class="a" style="left:220px;top:414px;width:1823px;height:26px;background:#FFFFFF"></div>
<div class="a" style="left:220px;top:440px;width:1823px;height:1px;background:#D5DCDC"></div>
<div class="cell nm" style="left:224px;top:414px;width:272px">Modelo Encuesta BIA &quot;RRHH&quot;</div>
<div class="a" style="left:497px;top:414px;width:1px;height:26px;background:#EEF1F1"></div>
<div class="cell dt" style="left:501px;top:414px;width:133px">26/05/2017 11:36:45</div>
<div class="a" style="left:635px;top:414px;width:1px;height:26px;background:#EEF1F1"></div>
<div class="cell dt" style="left:639px;top:414px;width:134px">31/07/2019 11:36:45</div>
<div class="a" style="left:774px;top:414px;width:1px;height:26px;background:#EEF1F1"></div>
<div class="cell" style="left:778px;top:415px;width:156px">Jacqueline Flores Demo</div>
<div class="a" style="left:935px;top:414px;width:1px;height:26px;background:#EEF1F1"></div>
<div class="cell" style="left:939px;top:415px;width:157px">BIA por Impacto</div>
<div class="a" style="left:1097px;top:414px;width:1px;height:26px;background:#EEF1F1"></div>
<div class="cell" style="left:1101px;top:415px;width:134px">Modelo Encuesta BIA &quot;RR</div>
<div class="a" style="left:1236px;top:414px;width:1px;height:26px;background:#EEF1F1"></div>
<div class="cell" style="left:1240px;top:415px;width:133px">Modelo Encuesta BIA &quot;RR</div>
<div class="a" style="left:1374px;top:414px;width:1px;height:26px;background:#EEF1F1"></div>
<div class="a" style="left:1513px;top:414px;width:1px;height:26px;background:#EEF1F1"></div>
<div class="cell" style="left:1517px;top:415px;width:111px">No</div>
<div class="a" style="left:1629px;top:414px;width:1px;height:26px;background:#EEF1F1"></div>
<div class="a" style="left:1745px;top:414px;width:1px;height:26px;background:#EEF1F1"></div>
<div class="cell" style="left:1749px;top:415px;width:132px">No</div>
<div class="a" style="left:1882px;top:414px;width:1px;height:26px;background:#EEF1F1"></div>
<div class="a" style="left:220px;top:441px;width:1823px;height:26px;background:#F9F9F9"></div>
<div class="a" style="left:220px;top:467px;width:1823px;height:1px;background:#D5DCDC"></div>
<div class="cell nm" style="left:224px;top:441px;width:272px">Modelo Encuesta BIA &quot;RRHH&quot;</div>
<div class="a" style="left:497px;top:441px;width:1px;height:26px;background:#EEF1F1"></div>
<div class="cell dt" style="left:501px;top:441px;width:133px">26/05/2017 11:36:45</div>
<div class="a" style="left:635px;top:441px;width:1px;height:26px;background:#EEF1F1"></div>
<div class="cell dt" style="left:639px;top:441px;width:134px">31/07/2019 11:36:45</div>
<div class="a" style="left:774px;top:441px;width:1px;height:26px;background:#EEF1F1"></div>
<div class="cell" style="left:778px;top:442px;width:156px">F.J.Tejedor</div>
<div class="a" style="left:935px;top:441px;width:1px;height:26px;background:#EEF1F1"></div>
<div class="cell" style="left:939px;top:442px;width:157px">BIA por Impacto</div>
<div class="a" style="left:1097px;top:441px;width:1px;height:26px;background:#EEF1F1"></div>
<div class="cell" style="left:1101px;top:442px;width:134px">Modelo Encuesta BIA &quot;RR</div>
<div class="a" style="left:1236px;top:441px;width:1px;height:26px;background:#EEF1F1"></div>
<div class="cell" style="left:1240px;top:442px;width:133px">Modelo Encuesta BIA &quot;RR</div>
<div class="a" style="left:1374px;top:441px;width:1px;height:26px;background:#EEF1F1"></div>
<div class="a" style="left:1513px;top:441px;width:1px;height:26px;background:#EEF1F1"></div>
<div class="cell" style="left:1517px;top:442px;width:111px">No</div>
<div class="a" style="left:1629px;top:441px;width:1px;height:26px;background:#EEF1F1"></div>
<div class="a" style="left:1745px;top:441px;width:1px;height:26px;background:#EEF1F1"></div>
<div class="cell" style="left:1749px;top:442px;width:132px">No</div>
<div class="a" style="left:1882px;top:441px;width:1px;height:26px;background:#EEF1F1"></div>
<div class="a" style="left:220px;top:468px;width:1823px;height:26px;background:#FFFFFF"></div>
<div class="a" style="left:220px;top:494px;width:1823px;height:1px;background:#D5DCDC"></div>
<div class="cell nm" style="left:224px;top:468px;width:272px">Encuesta Evaluación de Riesgos (2017)</div>
<div class="a" style="left:497px;top:468px;width:1px;height:26px;background:#EEF1F1"></div>
<div class="cell dt" style="left:501px;top:468px;width:133px">26/05/2017 11:36:53</div>
<div class="a" style="left:635px;top:468px;width:1px;height:26px;background:#EEF1F1"></div>
<div class="cell dt" style="left:639px;top:468px;width:134px">31/03/2019 11:25:10</div>
<div class="a" style="left:774px;top:468px;width:1px;height:26px;background:#EEF1F1"></div>
<div class="cell" style="left:778px;top:469px;width:156px">Francisco Romero</div>
<div class="a" style="left:935px;top:468px;width:1px;height:26px;background:#EEF1F1"></div>
<div class="cell" style="left:939px;top:469px;width:157px">Elementos, Riesgos y Controles</div>
<div class="a" style="left:1097px;top:468px;width:1px;height:26px;background:#EEF1F1"></div>
<div class="cell" style="left:1101px;top:469px;width:134px">Encuesta Evaluación de</div>
<div class="a" style="left:1236px;top:468px;width:1px;height:26px;background:#EEF1F1"></div>
<div class="cell" style="left:1240px;top:469px;width:133px">Encuesta Evaluación de</div>
<div class="a" style="left:1374px;top:468px;width:1px;height:26px;background:#EEF1F1"></div>
<div class="a" style="left:1513px;top:468px;width:1px;height:26px;background:#EEF1F1"></div>
<div class="cell" style="left:1517px;top:469px;width:111px">No</div>
<div class="a" style="left:1629px;top:468px;width:1px;height:26px;background:#EEF1F1"></div>
<div class="a" style="left:1745px;top:468px;width:1px;height:26px;background:#EEF1F1"></div>
<div class="cell" style="left:1749px;top:469px;width:132px">No</div>
<div class="a" style="left:1882px;top:468px;width:1px;height:26px;background:#EEF1F1"></div>
<div class="a" style="left:220px;top:495px;width:1823px;height:26px;background:#F9F9F9"></div>
<div class="a" style="left:220px;top:521px;width:1823px;height:1px;background:#D5DCDC"></div>
<div class="cell nm" style="left:224px;top:495px;width:272px">Encuesta Evaluación de Riesgos (2017)</div>
<div class="a" style="left:497px;top:495px;width:1px;height:26px;background:#EEF1F1"></div>
<div class="cell dt" style="left:501px;top:495px;width:133px">26/05/2017 11:36:53</div>
<div class="a" style="left:635px;top:495px;width:1px;height:26px;background:#EEF1F1"></div>
<div class="cell dt" style="left:639px;top:495px;width:134px">31/03/2019 11:25:10</div>
<div class="a" style="left:774px;top:495px;width:1px;height:26px;background:#EEF1F1"></div>
<div class="cell" style="left:778px;top:496px;width:156px">F.J.Tejedor</div>
<div class="a" style="left:935px;top:495px;width:1px;height:26px;background:#EEF1F1"></div>
<div class="cell" style="left:939px;top:496px;width:157px">Elementos, Riesgos y Controles</div>
<div class="a" style="left:1097px;top:495px;width:1px;height:26px;background:#EEF1F1"></div>
<div class="cell" style="left:1101px;top:496px;width:134px">Encuesta Evaluación de</div>
<div class="a" style="left:1236px;top:495px;width:1px;height:26px;background:#EEF1F1"></div>
<div class="cell" style="left:1240px;top:496px;width:133px">Encuesta Evaluación de</div>
<div class="a" style="left:1374px;top:495px;width:1px;height:26px;background:#EEF1F1"></div>
<div class="a" style="left:1513px;top:495px;width:1px;height:26px;background:#EEF1F1"></div>
<div class="cell" style="left:1517px;top:496px;width:111px">No</div>
<div class="a" style="left:1629px;top:495px;width:1px;height:26px;background:#EEF1F1"></div>
<div class="a" style="left:1745px;top:495px;width:1px;height:26px;background:#EEF1F1"></div>
<div class="cell" style="left:1749px;top:496px;width:132px">No</div>
<div class="a" style="left:1882px;top:495px;width:1px;height:26px;background:#EEF1F1"></div>
<div class="a" style="left:220px;top:522px;width:1823px;height:26px;background:#FFFFFF"></div>
<div class="a" style="left:220px;top:548px;width:1823px;height:1px;background:#D5DCDC"></div>
<div class="cell nm" style="left:224px;top:522px;width:272px">Encuesta de Evaluación Activos - Controles 18/07/2019</div>
<div class="a" style="left:497px;top:522px;width:1px;height:26px;background:#EEF1F1"></div>
<div class="cell dt" style="left:501px;top:522px;width:133px">18/07/2019 11:48:14</div>
<div class="a" style="left:635px;top:522px;width:1px;height:26px;background:#EEF1F1"></div>
<div class="a" style="left:774px;top:522px;width:1px;height:26px;background:#EEF1F1"></div>
<div class="a" style="left:935px;top:522px;width:1px;height:26px;background:#EEF1F1"></div>
<div class="cell" style="left:939px;top:523px;width:157px">Elementos, Riesgos y Controles</div>
<div class="a" style="left:1097px;top:522px;width:1px;height:26px;background:#EEF1F1"></div>
<div class="cell" style="left:1101px;top:523px;width:134px">Encuesta de Evaluación</div>
<div class="a" style="left:1236px;top:522px;width:1px;height:26px;background:#EEF1F1"></div>
<div class="a" style="left:1374px;top:522px;width:1px;height:26px;background:#EEF1F1"></div>
<div class="cell" style="left:1378px;top:523px;width:134px">Elaboración</div>
<div class="a" style="left:1513px;top:522px;width:1px;height:26px;background:#EEF1F1"></div>
<div class="cell" style="left:1517px;top:523px;width:111px">No</div>
<div class="a" style="left:1629px;top:522px;width:1px;height:26px;background:#EEF1F1"></div>
<div class="a" style="left:1745px;top:522px;width:1px;height:26px;background:#EEF1F1"></div>
<div class="cell" style="left:1749px;top:523px;width:132px">No</div>
<div class="a" style="left:1882px;top:522px;width:1px;height:26px;background:#EEF1F1"></div>
<div class="a" style="left:220px;top:549px;width:1823px;height:26px;background:#F9F9F9"></div>
<div class="a" style="left:220px;top:575px;width:1823px;height:1px;background:#D5DCDC"></div>
<div class="cell nm" style="left:224px;top:549px;width:272px">Encuesta Evaluación de Riesgos (2017) 28/03/2023</div>
<div class="a" style="left:497px;top:549px;width:1px;height:26px;background:#EEF1F1"></div>
<div class="cell dt" style="left:501px;top:549px;width:133px">28/03/2023 09:44:03</div>
<div class="a" style="left:635px;top:549px;width:1px;height:26px;background:#EEF1F1"></div>
<div class="a" style="left:774px;top:549px;width:1px;height:26px;background:#EEF1F1"></div>
<div class="a" style="left:935px;top:549px;width:1px;height:26px;background:#EEF1F1"></div>
<div class="cell" style="left:939px;top:550px;width:157px">Elementos, Riesgos y Controles</div>
<div class="a" style="left:1097px;top:549px;width:1px;height:26px;background:#EEF1F1"></div>
<div class="cell" style="left:1101px;top:550px;width:134px">Encuesta Evaluación de</div>
<div class="a" style="left:1236px;top:549px;width:1px;height:26px;background:#EEF1F1"></div>
<div class="a" style="left:1374px;top:549px;width:1px;height:26px;background:#EEF1F1"></div>
<div class="a" style="left:1513px;top:549px;width:1px;height:26px;background:#EEF1F1"></div>
<div class="cell" style="left:1517px;top:550px;width:111px">No</div>
<div class="a" style="left:1629px;top:549px;width:1px;height:26px;background:#EEF1F1"></div>
<div class="a" style="left:1745px;top:549px;width:1px;height:26px;background:#EEF1F1"></div>
<div class="cell" style="left:1749px;top:550px;width:132px">No</div>
<div class="a" style="left:1882px;top:549px;width:1px;height:26px;background:#EEF1F1"></div>
<div class="a" style="left:220px;top:576px;width:1823px;height:26px;background:#FFFFFF"></div>
<div class="a" style="left:220px;top:602px;width:1823px;height:1px;background:#D5DCDC"></div>
<div class="cell nm" style="left:224px;top:576px;width:272px">Encuesta Evaluación de Riesgos (2017) 10/05/2023</div>
<div class="a" style="left:497px;top:576px;width:1px;height:26px;background:#EEF1F1"></div>
<div class="cell dt" style="left:501px;top:576px;width:133px">10/05/2023 08:12:27</div>
<div class="a" style="left:635px;top:576px;width:1px;height:26px;background:#EEF1F1"></div>
<div class="a" style="left:774px;top:576px;width:1px;height:26px;background:#EEF1F1"></div>
<div class="a" style="left:935px;top:576px;width:1px;height:26px;background:#EEF1F1"></div>
<div class="cell" style="left:939px;top:577px;width:157px">Elementos, Riesgos y Controles</div>
<div class="a" style="left:1097px;top:576px;width:1px;height:26px;background:#EEF1F1"></div>
<div class="cell" style="left:1101px;top:577px;width:134px">Encuesta Evaluación de</div>
<div class="a" style="left:1236px;top:576px;width:1px;height:26px;background:#EEF1F1"></div>
<div class="a" style="left:1374px;top:576px;width:1px;height:26px;background:#EEF1F1"></div>
<div class="a" style="left:1513px;top:576px;width:1px;height:26px;background:#EEF1F1"></div>
<div class="cell" style="left:1517px;top:577px;width:111px">No</div>
<div class="a" style="left:1629px;top:576px;width:1px;height:26px;background:#EEF1F1"></div>
<div class="a" style="left:1745px;top:576px;width:1px;height:26px;background:#EEF1F1"></div>
<div class="cell" style="left:1749px;top:577px;width:132px">No</div>
<div class="a" style="left:1882px;top:576px;width:1px;height:26px;background:#EEF1F1"></div>
<div class="a" style="left:220px;top:603px;width:1823px;height:26px;background:#F9F9F9"></div>
<div class="a" style="left:220px;top:629px;width:1823px;height:1px;background:#D5DCDC"></div>
<div class="cell nm" style="left:224px;top:603px;width:272px">Encuesta Evaluación de Riesgos (2017) 10/05/2023</div>
<div class="a" style="left:497px;top:603px;width:1px;height:26px;background:#EEF1F1"></div>
<div class="cell dt" style="left:501px;top:603px;width:133px">10/05/2023 08:55:30</div>
<div class="a" style="left:635px;top:603px;width:1px;height:26px;background:#EEF1F1"></div>
<div class="cell dt" style="left:639px;top:603px;width:134px">07/06/2023 08:55:30</div>
<div class="a" style="left:774px;top:603px;width:1px;height:26px;background:#EEF1F1"></div>
<div class="cell" style="left:778px;top:604px;width:156px">prueba</div>
<div class="a" style="left:935px;top:603px;width:1px;height:26px;background:#EEF1F1"></div>
<div class="cell" style="left:939px;top:604px;width:157px">Elementos, Riesgos y Controles</div>
<div class="a" style="left:1097px;top:603px;width:1px;height:26px;background:#EEF1F1"></div>
<div class="cell" style="left:1101px;top:604px;width:134px">Encuesta Evaluación de</div>
<div class="a" style="left:1236px;top:603px;width:1px;height:26px;background:#EEF1F1"></div>
<div class="cell" style="left:1240px;top:604px;width:133px">Encuesta Evaluación de</div>
<div class="a" style="left:1374px;top:603px;width:1px;height:26px;background:#EEF1F1"></div>
<div class="a" style="left:1513px;top:603px;width:1px;height:26px;background:#EEF1F1"></div>
<div class="cell" style="left:1517px;top:604px;width:111px">No</div>
<div class="a" style="left:1629px;top:603px;width:1px;height:26px;background:#EEF1F1"></div>
<div class="a" style="left:1745px;top:603px;width:1px;height:26px;background:#EEF1F1"></div>
<div class="cell" style="left:1749px;top:604px;width:132px">No</div>
<div class="a" style="left:1882px;top:603px;width:1px;height:26px;background:#EEF1F1"></div>
<div class="a" style="left:220px;top:630px;width:1823px;height:26px;background:#FFFFFF"></div>
<div class="a" style="left:220px;top:656px;width:1823px;height:1px;background:#D5DCDC"></div>
<div class="cell nm" style="left:224px;top:630px;width:272px">Encuesta Evaluación de Riesgos (2017) 10/05/2023</div>
<div class="a" style="left:497px;top:630px;width:1px;height:26px;background:#EEF1F1"></div>
<div class="cell dt" style="left:501px;top:630px;width:133px">10/05/2023 08:55:30</div>
<div class="a" style="left:635px;top:630px;width:1px;height:26px;background:#EEF1F1"></div>
<div class="cell dt" style="left:639px;top:630px;width:134px">07/06/2023 08:55:30</div>
<div class="a" style="left:774px;top:630px;width:1px;height:26px;background:#EEF1F1"></div>
<div class="cell" style="left:778px;top:631px;width:156px">Alberto Rosell</div>
<div class="a" style="left:935px;top:630px;width:1px;height:26px;background:#EEF1F1"></div>
<div class="cell" style="left:939px;top:631px;width:157px">Elementos, Riesgos y Controles</div>
<div class="a" style="left:1097px;top:630px;width:1px;height:26px;background:#EEF1F1"></div>
<div class="cell" style="left:1101px;top:631px;width:134px">Encuesta Evaluación de</div>
<div class="a" style="left:1236px;top:630px;width:1px;height:26px;background:#EEF1F1"></div>
<div class="cell" style="left:1240px;top:631px;width:133px">Encuesta Evaluación de</div>
<div class="a" style="left:1374px;top:630px;width:1px;height:26px;background:#EEF1F1"></div>
<div class="a" style="left:1513px;top:630px;width:1px;height:26px;background:#EEF1F1"></div>
<div class="cell" style="left:1517px;top:631px;width:111px">No</div>
<div class="a" style="left:1629px;top:630px;width:1px;height:26px;background:#EEF1F1"></div>
<div class="a" style="left:1745px;top:630px;width:1px;height:26px;background:#EEF1F1"></div>
<div class="cell" style="left:1749px;top:631px;width:132px">No</div>
<div class="a" style="left:1882px;top:630px;width:1px;height:26px;background:#EEF1F1"></div>
<div class="a" style="left:220px;top:657px;width:1823px;height:26px;background:#F9F9F9"></div>
<div class="a" style="left:220px;top:683px;width:1823px;height:1px;background:#D5DCDC"></div>
<div class="cell nm" style="left:224px;top:657px;width:272px">Encuesta Evaluación de Riesgos (2017) 10/05/2023</div>
<div class="a" style="left:497px;top:657px;width:1px;height:26px;background:#EEF1F1"></div>
<div class="cell dt" style="left:501px;top:657px;width:133px">10/05/2023 08:55:30</div>
<div class="a" style="left:635px;top:657px;width:1px;height:26px;background:#EEF1F1"></div>
<div class="cell dt" style="left:639px;top:657px;width:134px">07/06/2023 08:55:30</div>
<div class="a" style="left:774px;top:657px;width:1px;height:26px;background:#EEF1F1"></div>
<div class="cell" style="left:778px;top:658px;width:156px">José V.</div>
<div class="a" style="left:935px;top:657px;width:1px;height:26px;background:#EEF1F1"></div>
<div class="cell" style="left:939px;top:658px;width:157px">Elementos, Riesgos y Controles</div>
<div class="a" style="left:1097px;top:657px;width:1px;height:26px;background:#EEF1F1"></div>
<div class="cell" style="left:1101px;top:658px;width:134px">Encuesta Evaluación de</div>
<div class="a" style="left:1236px;top:657px;width:1px;height:26px;background:#EEF1F1"></div>
<div class="cell" style="left:1240px;top:658px;width:133px">Encuesta Evaluación de</div>
<div class="a" style="left:1374px;top:657px;width:1px;height:26px;background:#EEF1F1"></div>
<div class="a" style="left:1513px;top:657px;width:1px;height:26px;background:#EEF1F1"></div>
<div class="cell" style="left:1517px;top:658px;width:111px">No</div>
<div class="a" style="left:1629px;top:657px;width:1px;height:26px;background:#EEF1F1"></div>
<div class="a" style="left:1745px;top:657px;width:1px;height:26px;background:#EEF1F1"></div>
<div class="cell" style="left:1749px;top:658px;width:132px">No</div>
<div class="a" style="left:1882px;top:657px;width:1px;height:26px;background:#EEF1F1"></div>
<div class="a" style="left:220px;top:684px;width:1823px;height:26px;background:#FFFFFF"></div>
<div class="a" style="left:220px;top:710px;width:1823px;height:1px;background:#D5DCDC"></div>
<div class="cell nm" style="left:224px;top:684px;width:272px">Encuesta Evaluación de Riesgos (2017) 10/05/2023</div>
<div class="a" style="left:497px;top:684px;width:1px;height:26px;background:#EEF1F1"></div>
<div class="cell dt" style="left:501px;top:684px;width:133px">10/05/2023 08:55:30</div>
<div class="a" style="left:635px;top:684px;width:1px;height:26px;background:#EEF1F1"></div>
<div class="cell dt" style="left:639px;top:684px;width:134px">07/06/2023 08:55:30</div>
<div class="a" style="left:774px;top:684px;width:1px;height:26px;background:#EEF1F1"></div>
<div class="cell" style="left:778px;top:685px;width:156px">Ramón S.</div>
<div class="a" style="left:935px;top:684px;width:1px;height:26px;background:#EEF1F1"></div>
<div class="cell" style="left:939px;top:685px;width:157px">Elementos, Riesgos y Controles</div>
<div class="a" style="left:1097px;top:684px;width:1px;height:26px;background:#EEF1F1"></div>
<div class="cell" style="left:1101px;top:685px;width:134px">Encuesta Evaluación de</div>
<div class="a" style="left:1236px;top:684px;width:1px;height:26px;background:#EEF1F1"></div>
<div class="cell" style="left:1240px;top:685px;width:133px">Encuesta Evaluación de</div>
<div class="a" style="left:1374px;top:684px;width:1px;height:26px;background:#EEF1F1"></div>
<div class="a" style="left:1513px;top:684px;width:1px;height:26px;background:#EEF1F1"></div>
<div class="cell" style="left:1517px;top:685px;width:111px">No</div>
<div class="a" style="left:1629px;top:684px;width:1px;height:26px;background:#EEF1F1"></div>
<div class="a" style="left:1745px;top:684px;width:1px;height:26px;background:#EEF1F1"></div>
<div class="cell" style="left:1749px;top:685px;width:132px">No</div>
<div class="a" style="left:1882px;top:684px;width:1px;height:26px;background:#EEF1F1"></div>
<div class="a" style="left:219px;top:164px;width:1px;height:552px;background:#C9D5E2"></div>
<div class="a" style="left:220px;top:710px;width:1823px;height:6px;background:#fff"></div>
<div class="a" style="left:220px;top:714px;width:1823px;height:1px;background:#A9C3E0"></div>
<div class="a" style="left:763px;top:163px;width:97px;height:77px;background:#D5DDDD;border:1px solid #B9CBE0"></div>
<div class="a" style="left:764px;top:166px;width:95px;height:1px;background:#fff"></div>
<div class="a" style="left:764px;top:167px;width:95px;height:22px;background:#AABDE8"></div>
<div class="a" style="left:764px;top:189px;width:95px;height:2px;background:#fff"></div>
<div class="a" style="left:764px;top:213px;width:95px;height:2px;background:#fff"></div>
<svg class="a" style="left:768px;top:170px" width="16" height="16" viewBox="0 0 16 16"><circle cx="6.3" cy="6.3" r="5" stroke="#222A38" stroke-width="2" fill="none"/><path d="M10 10l5 5" stroke="#222A38" stroke-width="2.4"/></svg>
<div class="t" style="left:792px;top:167px;line-height:22px;font-size:12px;color:#3a3a3a">Todas</div>
<svg class="a" style="left:768px;top:194px" width="16" height="16" viewBox="0 0 16 16"><circle cx="6.3" cy="6.3" r="5" stroke="#222A38" stroke-width="2" fill="none"/><path d="M10 10l5 5" stroke="#222A38" stroke-width="2.4"/></svg>
<div class="t" style="left:792px;top:191px;line-height:22px;font-size:12px;color:#3a3a3a">Abiertas</div>
<svg class="a" style="left:768px;top:218px" width="16" height="16" viewBox="0 0 16 16"><circle cx="6.3" cy="6.3" r="5" stroke="#222A38" stroke-width="2" fill="none"/><path d="M10 10l5 5" stroke="#222A38" stroke-width="2.4"/></svg>
<div class="t" style="left:792px;top:215px;line-height:22px;font-size:12px;color:#3a3a3a">Cerradas</div>
<div class="hbox" style="left:756px;top:127px;width:110px;height:116px"></div>
<div class="hbox" style="left:1105px;top:127px;width:253px;height:42px"></div>
<div class="hbox" style="left:1758px;top:160px;width:270px;height:44px"></div>
</body></html>
